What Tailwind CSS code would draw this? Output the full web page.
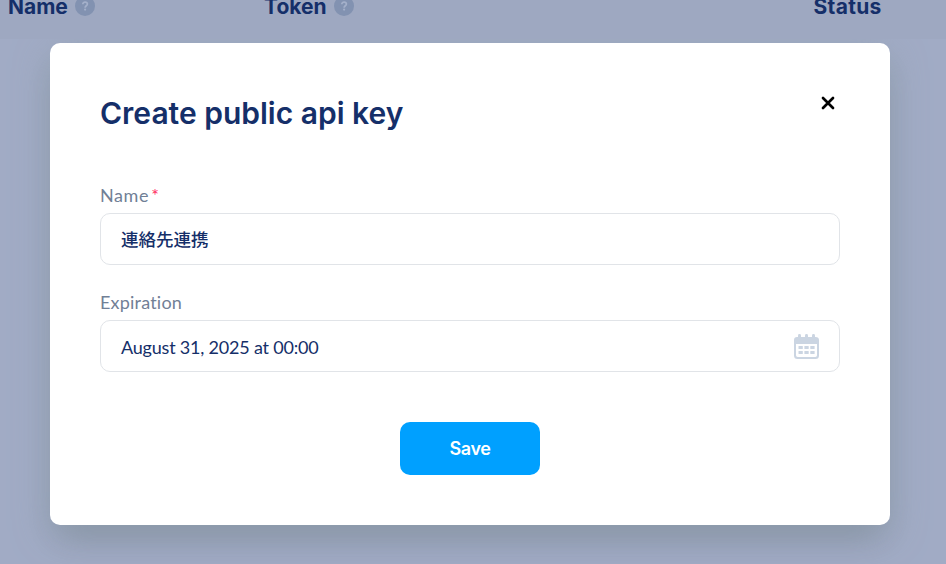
<!DOCTYPE html>
<html lang="en">
<head>
<meta charset="utf-8">
<title>API keys</title>
<script src="https://cdn.jsdelivr.net/npm/@tailwindcss/browser@4"></script>
</head>
<body class="h-[564px] w-[946px] overflow-hidden bg-[#a1abc5] font-['Inter','Noto_Sans_CJK_JP',sans-serif] text-[#152f69]">
  <div class="flex h-[43px] flex-col">
    <header class="grid h-[39px] shrink-0 grid-cols-[256px_549.5px_1fr] bg-[#9ea8c1] pl-2 text-[21px] leading-[14px] font-bold">
      <div class="flex items-start gap-[7px]"><span>Name</span>
        <svg class="-mt-[4px] size-5" viewBox="0 0 20 20"><circle cx="10" cy="10" r="10" fill="#8292b1"/><path d="M7.8 8.2c0-3 4.6-2.7 4.6-.1 0 1.7-2.3 1.7-2.3 3.6" fill="none" stroke="#a4b0ca" stroke-width="1.7"/><circle cx="10.1" cy="13.6" r="1.1" fill="#a4b0ca"/></svg>
      </div>
      <div class="flex items-start gap-[7px]"><span>Token</span>
        <svg class="-mt-[4px] size-5" viewBox="0 0 20 20"><circle cx="10" cy="10" r="10" fill="#8292b1"/><path d="M7.8 8.2c0-3 4.6-2.7 4.6-.1 0 1.7-2.3 1.7-2.3 3.6" fill="none" stroke="#a4b0ca" stroke-width="1.7"/><circle cx="10.1" cy="13.6" r="1.1" fill="#a4b0ca"/></svg>
      </div>
      <div class="tracking-[0.3px]">Status</div>
    </header>
  </div>
  <main class="mx-auto ml-[50px] flex h-[482px] w-[840px] flex-col rounded-[10px] bg-white px-[50px] pt-[50px] shadow-[0_10px_36px_rgba(145,163,175,0.8),0_20px_30px_-12px_rgba(50,45,60,0.3)]">
    <div class="flex h-[40px] items-start justify-between">
      <h1 class="text-[30px] leading-[40px] font-semibold">Create public api key</h1>
      <button class="mt-[3px] mr-[5px]" aria-label="Close"><svg class="size-[14px]" viewBox="0 0 14 14"><path d="M2 2l10 10M12 2L2 12" stroke="#000" stroke-width="2.7" stroke-linecap="round"/></svg></button>
    </div>
    <label class="mt-[49px] flex h-[31px] items-start font-['Lato',sans-serif] text-[18px] leading-[26px] tracking-[0.6px] text-[#718096]"><span>Name</span><span class="ml-[2px] text-[18px] leading-[26px] text-[#ff2b5f]">*</span></label>
    <div class="flex h-[52px] items-center rounded-[10px] border border-[#e1e4e8] px-5 font-['Noto_Sans_CJK_JP',sans-serif] text-[17.5px] leading-[26px] font-medium">連絡先連携</div>
    <label class="mt-[24px] h-[31px] font-['Lato',sans-serif] text-[18px] leading-[26px] tracking-[0.2px] text-[#718096] [font-variant-ligatures:none]">Expiration</label>
    <div class="flex h-[52px] items-center justify-between rounded-[10px] border border-[#e1e4e8] px-5 font-['Lato',sans-serif] text-[18px] leading-[26px]">
      <span class="pt-px tracking-[-0.2px]">August 31, 2025 at 00:00</span>
      <svg class="size-[26px]" viewBox="0 0 26 26" fill="#cbd5e2"><path fill-rule="evenodd" d="M4 4h18.500Q26 4 26 7v15.500Q26 26 22.500 26h-18Q1 26 1 22.500v-15.500Q1 4 4 4ZM3 11v11.300Q3 24 4.700 24h17.600Q24 24 24 22.300V11Z"/><g><rect x="5" y="1" width="3" height="6" rx="1.400"/><rect x="12" y="1" width="3" height="6" rx="1.400"/><rect x="19" y="1" width="3" height="6" rx="1.400"/><rect x="5.500" y="13" width="4.300" height="3" rx=".5"/><rect x="11.400" y="13" width="4.300" height="3" rx=".5"/><rect x="17.300" y="13" width="4.300" height="3" rx=".5"/><rect x="5.500" y="18" width="4.300" height="3" rx=".5"/><rect x="11.400" y="18" width="4.300" height="3" rx=".5"/><rect x="17.300" y="18" width="4.300" height="3" rx=".5"/></g></svg>
    </div>
    <button class="mt-[50px] h-[53px] w-[140px] self-center rounded-[10px] bg-[#00a0ff] text-[18px] font-semibold tracking-[-0.4px] text-white">Save</button>
  </main>
</body>
</html>
